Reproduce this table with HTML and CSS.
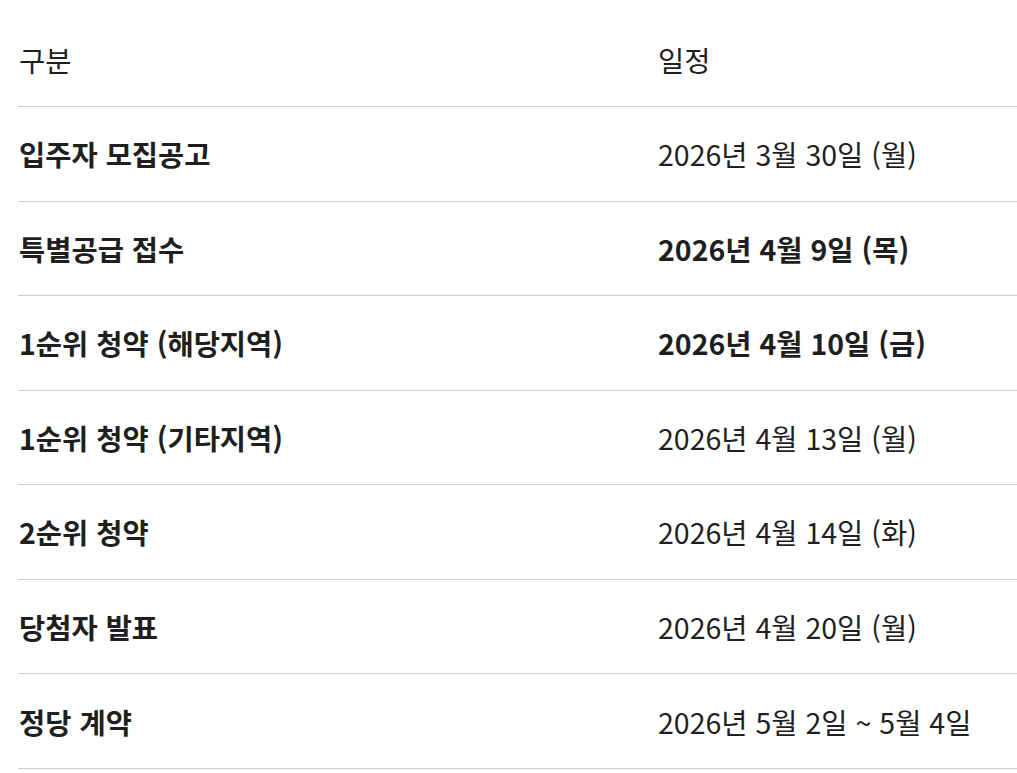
FILE: index.html
```html
<!DOCTYPE html>
<html lang="ko">
<head>
<meta charset="utf-8">
<title>일정</title>
<link rel="stylesheet" href="styles.css">
</head>
<body>
<div class="schedule">
  <div class="row head"><div class="c1">구분</div><div class="c2">일정</div></div>
  <div class="row"><div class="c1 b">입주자 모집공고</div><div class="c2">2026년 3월 30일 (월)</div></div>
  <div class="row"><div class="c1 b">특별공급 접수</div><div class="c2 b">2026년 4월 9일 (목)</div></div>
  <div class="row"><div class="c1 b">1순위 청약 (해당지역)</div><div class="c2 b">2026년 4월 10일 (금)</div></div>
  <div class="row"><div class="c1 b">1순위 청약 (기타지역)</div><div class="c2">2026년 4월 13일 (월)</div></div>
  <div class="row"><div class="c1 b">2순위 청약</div><div class="c2">2026년 4월 14일 (화)</div></div>
  <div class="row"><div class="c1 b">당첨자 발표</div><div class="c2">2026년 4월 20일 (월)</div></div>
  <div class="row"><div class="c1 b">정당 계약</div><div class="c2">2026년 5월 2일 ~ 5월 4일</div></div>
</div>
</body>
</html>
```
FILE: styles.css
```css
html, body {
  margin: 0;
  padding: 0;
  background: #fff;
}
body {
  font-family: "Noto Sans CJK KR", "Noto Sans", sans-serif;
  color: #1f1f1f;
  overflow: hidden;
}
.schedule {
  margin: 12.4px 0 0 18px;
}
.row {
  display: grid;
  grid-template-columns: 639px 1fr;
  align-items: center;
  height: 93.57px;
  border-bottom: 1px solid #cbcbcb;
  font-size: 28.5px;
  line-height: 1.3;
}
.c1, .c2 {
  padding-left: 1px;
  white-space: nowrap;
}
.b {
  font-weight: 700;
}
```
